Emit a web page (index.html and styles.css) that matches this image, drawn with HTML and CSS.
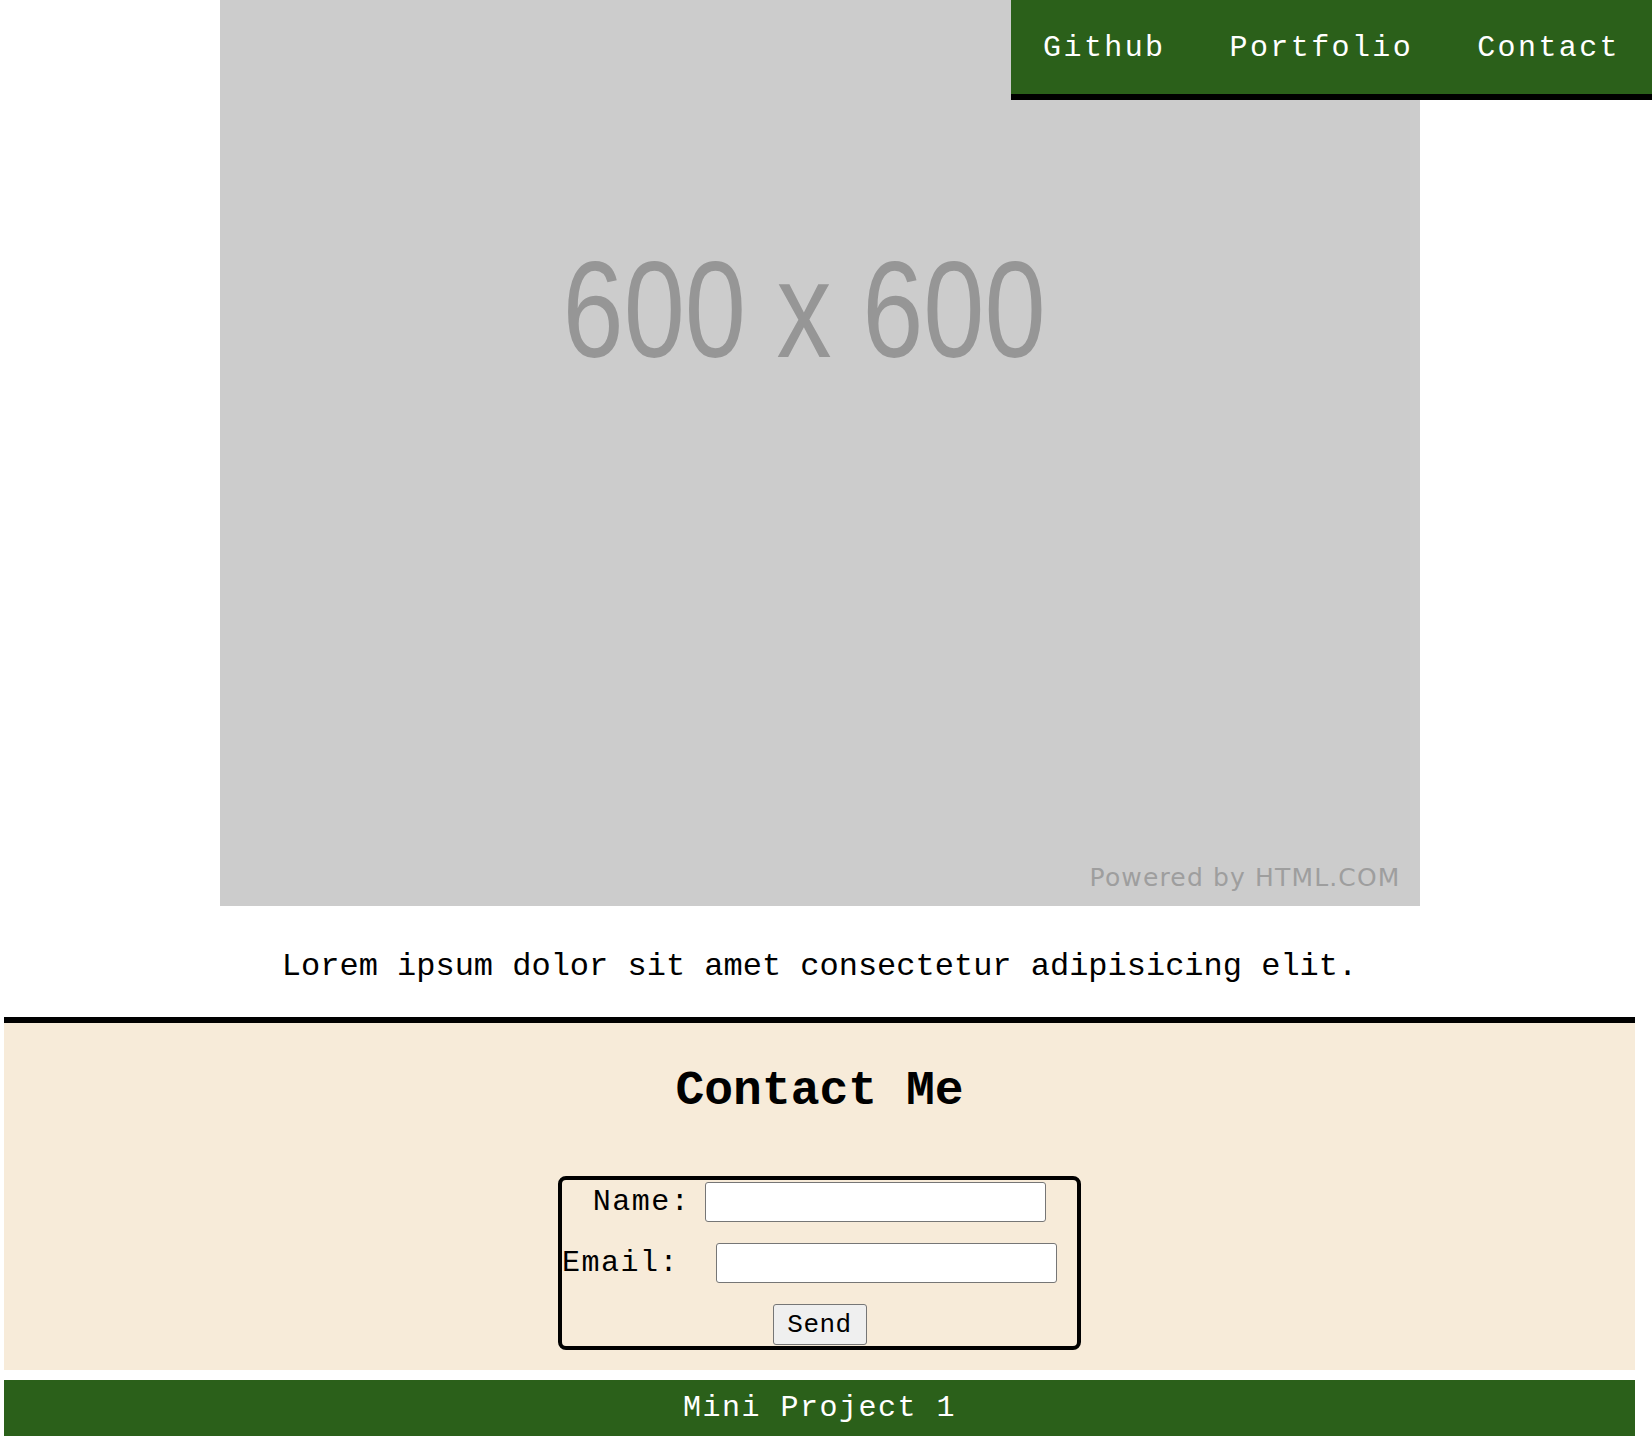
FILE: index.html
```html
<!DOCTYPE html>
<html lang="en">
<head>
<meta charset="utf-8">
<title>Mini Project 1</title>
<link rel="stylesheet" href="styles.css">
</head>
<body>
<nav class="topnav">
  <a class="topnav-link" href="#">Github</a>
  <a class="topnav-link" href="#">Portfolio</a>
  <a class="topnav-link" href="#">Contact</a>
</nav>
<main class="page">
  <div class="hero">
    <span class="hero-size">600 x 600</span>
    <span class="hero-credit">Powered by HTML.COM</span>
  </div>
  <p class="intro">Lorem ipsum dolor sit amet consectetur adipisicing elit.</p>
  <section class="contact">
    <h2 class="contact-title">Contact Me</h2>
    <form class="contact-form">
      <div class="form-row">
        <label class="form-label form-label-name">Name:</label>
        <input class="form-input" type="text">
      </div>
      <div class="form-row">
        <label class="form-label form-label-email">Email:</label>
        <input class="form-input form-input-email" type="text">
      </div>
      <div class="form-row">
        <button class="form-send" type="button">Send</button>
      </div>
    </form>
  </section>
  <footer class="footer">Mini Project 1</footer>
</main>
</body>
</html>
```
FILE: styles.css
```css
html, body {
  margin: 0;
  padding: 0;
  background: #ffffff;
}

body {
  font-family: "Liberation Mono", "Courier New", monospace;
  color: #000000;
}

.topnav {
  position: absolute;
  top: 0;
  right: 0;
  display: flex;
  height: 92px;
  padding-top: 2px;
  background: #2b601a;
  border-bottom: 6px solid #000000;
}

.topnav-link {
  padding: 0 32px;
  font-size: 30px;
  letter-spacing: 2.4px;
  line-height: 92px;
  color: #ffffff;
  text-decoration: none;
}

.page {
  margin-left: 4px;
  width: 1631px;
}

.hero {
  display: flex;
  flex-direction: column;
  box-sizing: border-box;
  width: 1200px;
  height: 906px;
  margin: 0 auto;
  padding: 242px 0 0 343px;
  background: #cccccc;
}

.hero-size {
  align-self: flex-start;
  font-family: "Liberation Sans", Arial, sans-serif;
  font-size: 110px;
  line-height: 1;
  color: #969696;
  transform: scaleY(1.24);
  transform-origin: top left;
  white-space: nowrap;
}

.hero-credit {
  margin-top: auto;
  margin-right: 19px;
  margin-bottom: 14px;
  align-self: flex-end;
  font-family: "DejaVu Sans", Verdana, sans-serif;
  font-size: 25px;
  letter-spacing: 1.15px;
  color: #9e9e9e;
  white-space: nowrap;
}

.intro {
  margin: 42px 0 32px;
  font-size: 32px;
  text-align: center;
}

.contact {
  background: #f7ebd9;
  border-top: 6px solid #000000;
  padding-bottom: 20px;
}

.contact-title {
  margin: 41px 0 58px;
  font-size: 48px;
  font-weight: bold;
  text-align: center;
}

.contact-form {
  display: flex;
  flex-direction: column;
  gap: 21px;
  box-sizing: border-box;
  width: 523px;
  margin: 0 auto;
  padding: 2px 0 1px;
  border: 4px solid #000000;
  border-radius: 8px;
}

.form-row {
  display: flex;
  align-items: center;
  justify-content: center;
}

.form-label {
  font-size: 30px;
  letter-spacing: 1.5px;
}

.form-label-name {
  margin-right: 15px;
}

.form-label-email {
  margin-right: 37px;
}

.form-input {
  box-sizing: border-box;
  width: 341px;
  height: 40px;
  margin: 0;
  border: 1px solid #767676;
  border-radius: 3px;
  background: #ffffff;
}

.form-input-email {
  margin-right: 20px;
}

.form-send {
  box-sizing: border-box;
  width: 94px;
  height: 41px;
  padding: 0;
  font-family: "Liberation Mono", "Courier New", monospace;
  font-size: 26px;
  letter-spacing: 0.5px;
  color: #000000;
  background: #efefef;
  border: 1px solid #767676;
  border-radius: 3px;
}

.footer {
  margin-top: 10px;
  height: 56px;
  background: #2b601a;
  color: #ffffff;
  font-size: 30px;
  letter-spacing: 1.5px;
  line-height: 56px;
  text-align: center;
}
```
